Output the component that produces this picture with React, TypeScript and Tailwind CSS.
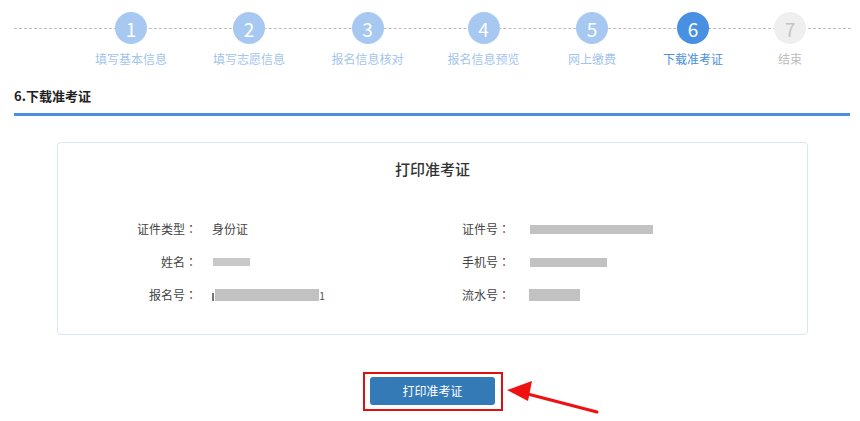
import React from 'react';

interface Step {
  num: number;
  label: string;
  width: string;
  state: 'done' | 'active' | 'todo';
}

const steps: Step[] = [
  { num: 1, label: '填写基本信息', width: 'w-[118px]', state: 'done' },
  { num: 2, label: '填写志愿信息', width: 'w-[118px]', state: 'done' },
  { num: 3, label: '报名信息核对', width: 'w-[119px]', state: 'done' },
  { num: 4, label: '报名信息预览', width: 'w-[113px]', state: 'done' },
  { num: 5, label: '网上缴费', width: 'w-[104px]', state: 'done' },
  { num: 6, label: '下载准考证', width: 'w-[98px]', state: 'active' },
  { num: 7, label: '结束', width: 'w-[96px]', state: 'todo' },
];

const circleClass = {
  done: 'bg-[#a7c9f1] text-white',
  active: 'bg-[#4a90e2] text-white',
  todo: 'bg-[#efefef] text-[#c4c4c4]',
};

const labelClass = {
  done: 'text-[#a3c4ee]',
  active: 'text-[#4a8fe0]',
  todo: 'text-[#bcbcbc]',
};

const Bar = ({ className }: { className: string }) => (
  <span className={`inline-block align-middle bg-[#c2c2c2] ${className}`} />
);

// full-width colon centred in its cell, as the original page renders it
const Label = ({ text }: { text: string }) => (
  <>
    {text}
    <span style={{ fontFamily: '"Noto Sans CJK TC", sans-serif' }}>：</span>
  </>
);

const InfoRow = ({
  leftLabel,
  leftValue,
  rightLabel,
  rightValue,
}: {
  leftLabel: string;
  leftValue: React.ReactNode;
  rightLabel: string;
  rightValue: React.ReactNode;
}) => (
  <div className="flex items-center h-[20px] text-[12px] text-[#444]">
    <div className="w-[139px] text-right">
      <Label text={leftLabel} />
    </div>
    <div className="w-[238px] ml-[15px] flex items-center">{leftValue}</div>
    <div className="w-[60px] text-right">
      <Label text={rightLabel} />
    </div>
    <div className="ml-[20px] flex items-center">{rightValue}</div>
  </div>
);

export default function App() {
  return (
    <div
      className="relative w-[860px] h-[421px] bg-white overflow-hidden"
      style={{ fontFamily: '"Noto Sans CJK SC", "Noto Sans", sans-serif' }}
    >
      {/* steps */}
      <div className="relative px-[14px] pt-[12px] h-[80px]">
        <div className="absolute left-[14px] right-[9px] top-[28px] border-t border-dashed border-[#bdbdbd]" />
        <div className="relative flex ml-[58px]">
          {steps.map((s) => (
            <div key={s.num} className={`${s.width} flex flex-col items-center shrink-0`}>
              <div
                className={`w-[32px] h-[32px] rounded-full flex items-center justify-center text-[19px] leading-none ${circleClass[s.state]}`}
              >
                {s.num}
              </div>
              <div className={`mt-[8px] text-[12px] leading-[14px] whitespace-nowrap ${labelClass[s.state]}`}>
                {s.label}
              </div>
            </div>
          ))}
        </div>
      </div>

      {/* section heading */}
      <div className="mx-[14px] mr-[10px] border-b-[3px] border-[#4a90e2] pb-[9px]">
        <div className="text-[13px] font-bold text-[#222] leading-[16px] pt-[8px]">6.下载准考证</div>
      </div>

      {/* card */}
      <div className="ml-[57px] w-[751px] mt-[26px] border border-[#dce6f3] rounded-[4px] pt-[14px] pb-[29px]">
        <div className="text-center text-[15px] leading-[24px] font-medium text-[#333]">打印准考证</div>
        <div className="mt-[38px] flex flex-col gap-[13px]">
          <InfoRow
            leftLabel="证件类型"
            leftValue={<span>身份证</span>}
            rightLabel="证件号"
            rightValue={<Bar className="w-[123px] h-[9px]" />}
          />
          <InfoRow
            leftLabel="姓名"
            leftValue={<Bar className="w-[37px] h-[8px] ml-[1px] bg-[#c8c8c8]" />}
            rightLabel="手机号"
            rightValue={<Bar className="w-[77px] h-[9px]" />}
          />
          <InfoRow
            leftLabel="报名号"
            leftValue={
              <span className="flex items-center">
                <span className="inline-block w-[2px] h-[8px] bg-[#777] mt-[3px]" />
                <Bar className="w-[104px] h-[12px] ml-[1px]" />
                <span className="text-[11px] text-[#556] leading-none">1</span>
              </span>
            }
            rightLabel="流水号"
            rightValue={<Bar className="w-[51px] h-[12px] -ml-[1px]" />}
          />
        </div>
      </div>

      {/* print button */}
      <div className="mt-[37px] flex justify-center pl-[6px]">
        <div className="border-2 border-[#e01010] pl-[5px] pr-[6px] pt-[3px] pb-[4px]">
          <button className="w-[125px] h-[28px] bg-[#337ab7] rounded-[3px] text-white text-[12px]">
            打印准考证
          </button>
        </div>
      </div>

      {/* arrow */}
      <svg className="absolute left-[500px] top-[375px]" width="110" height="45" viewBox="0 0 110 45">
        <line x1="97" y1="37" x2="20" y2="17" stroke="#f01010" strokeWidth="3" strokeLinecap="round" />
        <polygon points="7,15 32,6 28,26" fill="#f01010" />
      </svg>
    </div>
  );
}
